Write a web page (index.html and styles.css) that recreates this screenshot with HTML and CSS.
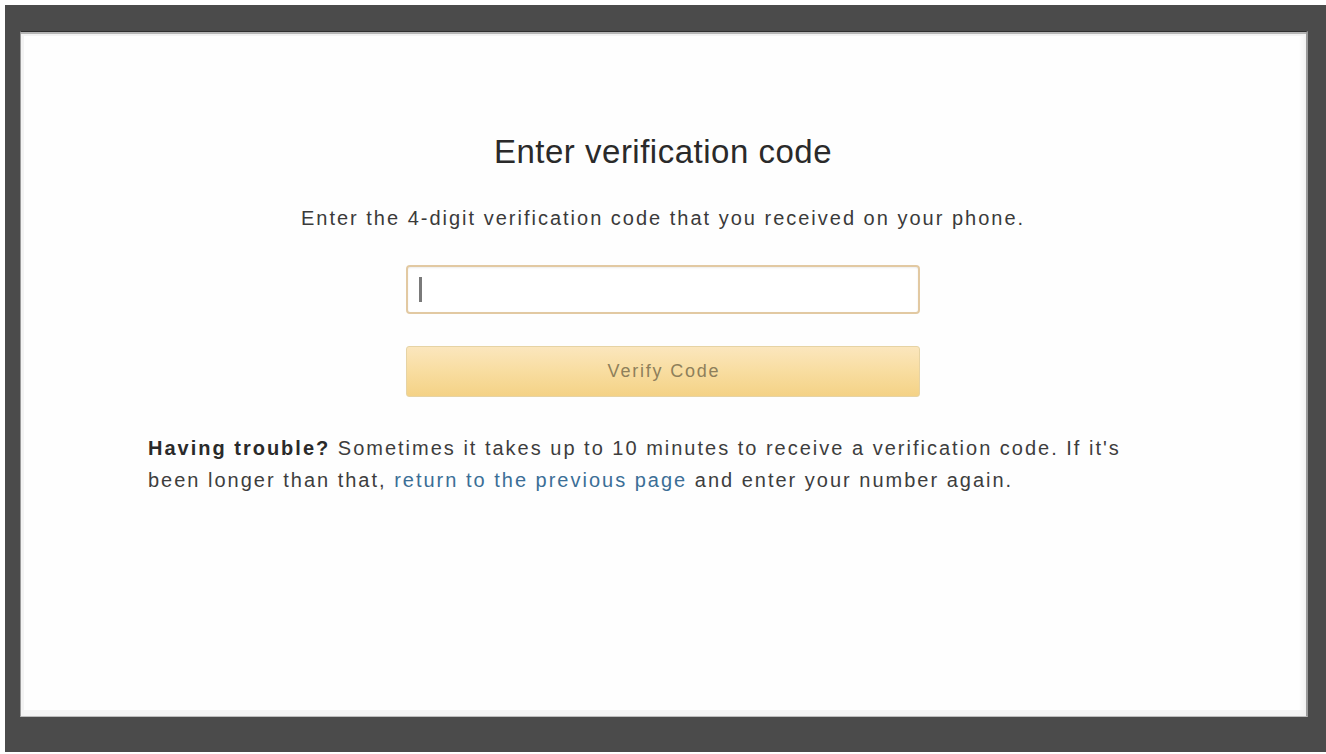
FILE: index.html
```html
<!DOCTYPE html>
<html lang="en">
<head>
<meta charset="utf-8">
<title>Enter verification code</title>
<link rel="stylesheet" href="styles.css">
</head>
<body>
<div class="frame">
  <main class="card">
    <h1 class="title">Enter verification code</h1>
    <p class="subtitle">Enter the 4-digit verification code that you received on your phone.</p>
    <div class="form">
      <div class="input"><span class="caret"></span></div>
      <button class="btn" type="button">Verify Code</button>
    </div>
    <p class="trouble"><strong>Having trouble?</strong> Sometimes it takes up to 10 minutes to receive a verification code. If it's been longer than that, <a href="#" class="link">return to the previous page</a> and enter your number again.</p>
  </main>
</div>
</body>
</html>
```

FILE: styles.css
```css
html, body {
  margin: 0;
  padding: 0;
  background: #ffffff;
}
body {
  width: 1326px;
  height: 754px;
  padding: 5px 0 2px 5px;
  box-sizing: border-box;
  font-family: "Liberation Sans", Arial, sans-serif;
  overflow: hidden;
}
.frame {
  height: 747px;
  box-sizing: border-box;
  background: #4b4b4b;
  padding: 26px 18px 35px 15px;
}
.card {
  height: 686px;
  box-sizing: border-box;
  background: #fefefe;
  border-top: 1px solid #2e2e2e;
  border-right: 2px solid #9a9a9a;
  border-bottom: 1px solid #bdbdbd;
  border-left: 1px solid #9a9a9a;
  box-shadow: inset 0 2px 0 #b5b5b5, inset 0 4px 0 #f3f3f3, inset 3px 0 0 #f3f3f3, inset -6px 0 6px -4px #eeeeee, inset 0 -6px 0 #f5f5f5;
  padding: 100px 128px 0 127px;
  display: flex;
  flex-direction: column;
  align-items: center;
}
.title {
  margin: 0;
  font-weight: normal;
  font-size: 33px;
  line-height: 40px;
  color: #2a2a2a;
  letter-spacing: 0.5px;
}
.subtitle {
  margin: 34px 0 0;
  font-size: 20px;
  line-height: 24px;
  letter-spacing: 2px;
  color: #3a3a3a;
}
.form {
  margin-top: 35px;
  width: 514px;
  display: flex;
  flex-direction: column;
  gap: 32px;
}
.input {
  height: 49px;
  box-sizing: border-box;
  border: 2px solid #e2c9a2;
  border-radius: 4px;
  background: #ffffff;
  box-shadow: inset 0 1px 2px rgba(0,0,0,0.08);
  display: flex;
  align-items: center;
  padding-left: 11px;
}
.caret {
  width: 3px;
  height: 25px;
  background: #7a7a7a;
}
.btn {
  height: 51px;
  border: 1px solid #e6d3a4;
  border-radius: 3px;
  background: linear-gradient(to bottom, #fbe6bd 0%, #f8dda0 50%, #f4d286 100%);
  color: #8e7f5b;
  font-family: "Liberation Sans", Arial, sans-serif;
  font-size: 18px;
  letter-spacing: 1.8px;
  padding: 0 0 0 2px;
}
.trouble {
  align-self: stretch;
  margin: 35px 0 0;
  font-size: 20px;
  line-height: 32px;
  letter-spacing: 2px;
  color: #3d3d3d;
}
.trouble strong {
  color: #2a2a2a;
}
.link {
  color: #3b6e96;
  text-decoration: none;
}
```
